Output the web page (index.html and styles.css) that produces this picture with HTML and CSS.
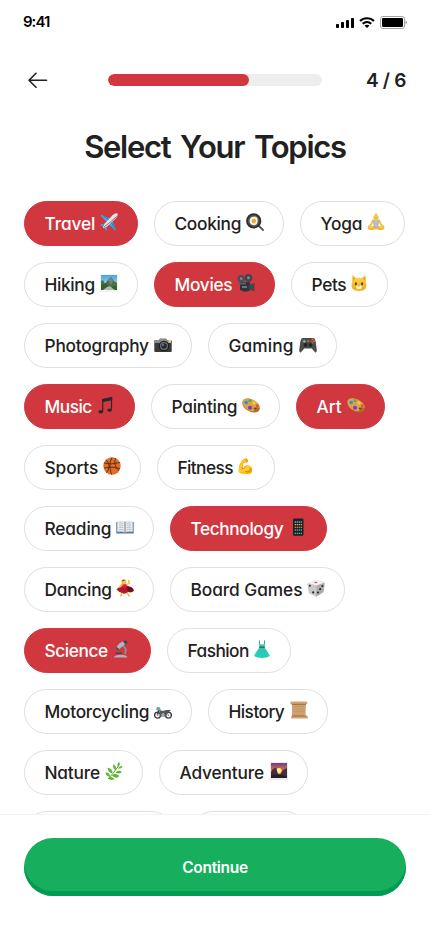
FILE: index.html
```html
<!DOCTYPE html>
<html lang="en">
<head>
<meta charset="utf-8">
<meta name="viewport" content="width=device-width, initial-scale=1">
<title>Select Your Topics</title>
<link rel="stylesheet" href="styles.css">
</head>
<body>
<svg class="defs" width="0" height="0" aria-hidden="true">
  <defs>
    <linearGradient id="gold" x1="0" y1="0" x2="0" y2="1"><stop offset="0" stop-color="#ffd95a"/><stop offset="1" stop-color="#eaa91c"/></linearGradient>
    <linearGradient id="sky" x1="0" y1="0" x2="0" y2="1"><stop offset="0" stop-color="#4aa6e0"/><stop offset="1" stop-color="#c9e7f5"/></linearGradient>
    <linearGradient id="dusk" x1="0" y1="0" x2="0" y2="1"><stop offset="0" stop-color="#6a3f8f"/><stop offset=".5" stop-color="#e5703d"/><stop offset="1" stop-color="#ffc84a"/></linearGradient>
    <symbol id="palette" viewBox="0 0 18 18">
      <path d="M.4 7.200C.2 3.500 4 2 8.200 3.200C13.500 4.500 18 8.600 17.800 12.500C17.600 16.200 13 17.300 8.500 15.700C4 14.200.6 11 .4 7.200Z" fill="#a96f28"/>
      <path d="M.4 6.500C.2 2.900 4 1.700 8.200 2.700C13.500 4 18 8 17.800 11.600C17.600 12.700 16.400 11.300 14.600 11.300C12.800 11.300 13.600 14.800 11.300 15.200C6 15.500.7 11 .4 6.500Z" fill="#dca04e"/>
      <circle cx="7.800" cy="4.600" r="1.600" fill="#49b83f"/><circle cx="4.200" cy="6.500" r="1.800" fill="#2496d6"/><circle cx="12" cy="6.900" r="1.600" fill="#efd02d"/><circle cx="8" cy="11.700" r="2" fill="#8038bb"/><circle cx="15.300" cy="9.700" r="1.500" fill="#e65236"/><ellipse cx="13" cy="12.500" rx="1.300" ry="1" fill="#6e4517"/>
    </symbol>
  </defs>
</svg>
<div class="screen">
  <div class="status">
    <span class="status__time">9:41</span>
    <span class="status__icons">
      <svg class="signal" width="18" height="11" viewBox="0 0 18 11"><rect x="0" y="7" width="3" height="4" rx=".8"/><rect x="5" y="5" width="3" height="6" rx=".8"/><rect x="10" y="3" width="3" height="8" rx=".8"/><rect x="15" y="1" width="3" height="10" rx=".8"/></svg>
      <svg class="wifi" width="16" height="11" viewBox="0 0 16 11"><path d="M1 4C4.800.3 11.200.3 15 4M3.700 6.800C6.200 4.500 9.800 4.500 12.300 6.800" fill="none" stroke="#000" stroke-width="2.100"/><path d="M5.500 8.600Q8 6.800 10.500 8.600L8 11Z"/></svg>
      <svg class="battery" width="27" height="13" viewBox="0 0 27 13"><rect x=".5" y=".5" width="24" height="12" rx="2.500" fill="none" stroke="#a3a3a3"/><rect x="2" y="2" width="21" height="9" rx="1.200"/><path d="M25.500 4.500Q27 5 27 6.500T25.500 8.500Z" fill="#a3a3a3"/></svg>
    </span>
  </div>

  <header class="header">
    <button class="back" aria-label="Back"><svg width="20" height="16" viewBox="0 0 20 16"><path d="M18.500 8.300H1M8 1.300L1 8.300 8 15.300" fill="none" stroke="#212121" stroke-width="1.600" stroke-linecap="round" stroke-linejoin="round"/></svg></button>
    <div class="progress"><div class="progress__fill"></div></div>
    <span class="step">4 / 6</span>
  </header>

  <h1 class="title">Select Your Topics</h1>

  <main class="topics">
    <button class="chip chip--on travel">Travel<svg class="icon" viewBox="0 0 18 18"><path d="M9.800 5.500L1.600 1.800 .8 3 6.500 8.800ZM12.400 8.400L16.200 16.600 14.900 17.300 9.200 11.500Z" fill="#3ea7ea"/><path d="M4.600 11.500L.8 11.100 .4 12.200 4 14ZM6.500 13.500L7 17.200 5.800 17.600 4 14Z" fill="#3ea7ea"/><path d="M17.500.5C16 0 14 .8 12.500 2.300L4.500 10.800 2.800 15.200 7.200 13.500 15.700 5.500C17.200 4 18 2 17.500.5Z" fill="#dfe5ea"/><path d="M16.500 3.500Q11 9 4 14" stroke="#71808d" stroke-width="1" fill="none"/><path d="M3 2.600L8.500 6.500M11.300 9.500L15.400 16" stroke="#286f9e" stroke-width=".8"/></svg></button>
    <button class="chip cooking">Cooking<svg class="icon" viewBox="0 0 18 18"><path d="M12.500 12.500L17 17" stroke="#555" stroke-width="1.800" stroke-linecap="round"/><circle cx="7.700" cy="7.900" r="7.600" fill="#2d302e"/><circle cx="7.700" cy="7.900" r="5.800" fill="#535751"/><path d="M4 6C5 3.500 7 4 8.500 3.500C11 3.500 12.200 6 11.600 8.500C11.600 11.500 9 12.800 6.800 12C3.800 11.500 3 8.500 4 6Z" fill="#f7f1e5"/><circle cx="7.800" cy="8" r="2.200" fill="#f5a623"/></svg></button>
    <button class="chip yoga">Yoga<svg class="icon" viewBox="0 0 18 18"><circle cx="9" cy="1.700" r="1.200" fill="#e6aa25"/><circle cx="9" cy="4" r="2.600" fill="url(#gold)"/><path d="M6.300 7L3.500 12.500 1.500 13.500M11.700 7L14.500 12.500 16.500 13.500" fill="none" stroke="#f3ba33" stroke-width="1.700" stroke-linecap="round"/><path d="M5.800 7Q9 6 12.200 7L11.500 13H6.500Z" fill="#b9bdc3"/><path d="M.6 14.800Q1 13 5 13.300Q9 11.500 13 13.300Q17 13 17.400 14.800Q17.500 17 13.500 17L9 16.200 4.500 17Q.5 17 .6 14.800Z" fill="url(#gold)"/><path d="M5.500 13.800Q9 11 12.500 13.800L9 15Z" fill="#aeb2b8"/></svg></button>
    <button class="chip hiking">Hiking<svg class="icon" viewBox="0 0 18 18"><path d="M0 0H18V18H0Z" fill="#f2f2ee"/><path d="M1 1H17V16H1Z" fill="url(#sky)"/><path d="M1 7L3 6 5 10 8 6 11 3 14 7 17 9V14H1Z" fill="#4f7044"/><path d="M8 6L11 3 13 7 11 11Z" fill="#718784"/><path d="M1 11L6 9 9 13 17 12V16H1Z" fill="#355f35"/><path d="M7 13Q11 11 12 14L15 16H3Z" fill="#b4bda8"/></svg></button>
    <button class="chip chip--on movies">Movies<svg class="icon" viewBox="0 0 18 18"><circle cx="4.200" cy="4.600" r="3.700" fill="#4c4f55"/><circle cx="11.500" cy="3.900" r="3.800" fill="#42454a"/><circle cx="4.200" cy="4.600" r="1.300" fill="#888c94"/><circle cx="11.500" cy="3.900" r="1.400" fill="#888c94"/><path d="M3 8H13V16.500Q8 19 3 16Z" fill="#303338"/><path d="M12 11L17.500 9V17.500L12 15Z" fill="#42454b"/><path d="M1 8.500H9V10.500H1Z" fill="#5b5e66"/><path d="M5 12H10V14H5Z" fill="#5b7890"/></svg></button>
    <button class="chip pets">Pets<svg class="icon" viewBox="0 0 18 18"><path d="M2 8L1.800 2Q2 .8 3.200 1.500L6.500 4Q9 3.300 11.500 4L14.800 1.500Q16 .8 16.200 2L16 8Q18.500 16.800 9 17Q-.5 16.800 2 8Z" fill="url(#gold)"/><path d="M3 2.800L5.200 4.500 3 7ZM15 2.800L12.800 4.500 15 7Z" fill="#e99b4a"/><ellipse cx="5.900" cy="9.800" rx="1" ry="1.500" fill="#44371d"/><ellipse cx="12.100" cy="9.800" rx="1" ry="1.500" fill="#44371d"/><ellipse cx="9" cy="13.200" rx="2.800" ry="2" fill="#fff0b5"/><path d="M8 11.500H10L9 12.800Z" fill="#d66d55"/></svg></button>
    <button class="chip photography">Photography<svg class="icon" viewBox="0 0 18 18"><path d="M.3 6Q.3 5 1.300 5H5L6 3.800H12L13 5H16.700Q17.700 5 17.700 6V16Q17.700 17 16.700 17H1.300Q.3 17 .3 16Z" fill="#393939"/><path d="M.3 6Q.3 5 1.300 5H5L6 3.800H12L13 5H17V8H.3Z" fill="#8b8b88"/><circle cx="10" cy="11" r="5.300" fill="#202123"/><circle cx="10" cy="11" r="4" fill="#6b7077"/><circle cx="10" cy="11" r="2.800" fill="#25272b"/><circle cx="9" cy="10" r="1" fill="#7c8794"/><path d="M14.500 5H17V7.500H14.500Z" fill="#f0d18c"/></svg></button>
    <button class="chip gaming">Gaming<svg class="icon" viewBox="0 0 18 18"><path d="M3.500 3H14.500Q16.200 3.400 16.800 7.500L17.800 15.500Q17.500 18 16 17.200L12.800 13.500H5.200L2 17.200Q.5 18 .2 15.500L1.200 7.500Q1.800 3.400 3.500 3Z" fill="#4b4b4a"/><path d="M3.500 6.300H6.900M5.200 4.700V8" stroke="#aaa" stroke-width="1"/><circle cx="6.500" cy="10" r="1.900" fill="#252525"/><circle cx="11.500" cy="10" r="1.900" fill="#252525"/><path d="M8 6H10" stroke="#aaa"/><circle cx="13.500" cy="4.600" r="1" fill="#e9643e"/><circle cx="15" cy="6.200" r="1" fill="#e9643e"/><circle cx="12" cy="6.200" r="1" fill="#a7532d"/><circle cx="13.500" cy="7.800" r="1" fill="#b75d36"/></svg></button>
    <button class="chip chip--on music">Music<svg class="icon" viewBox="0 0 18 18"><path d="M5 3L15.200.8V4.200L5 6.200Z" fill="#2a2a2c"/><path d="M5.700 3.500V15.500M14.500 2V13.500" stroke="#2a2a2c" stroke-width="1.200"/><ellipse cx="3.800" cy="15.800" rx="2.400" ry="1.700" fill="#2a2a2c"/><ellipse cx="12.600" cy="14.100" rx="2.400" ry="1.700" fill="#2a2a2c"/></svg></button>
    <button class="chip painting">Painting<svg class="icon" viewBox="0 0 18 18"><use href="#palette"/></svg></button>
    <button class="chip chip--on art">Art<svg class="icon" viewBox="0 0 18 18"><use href="#palette"/></svg></button>
    <button class="chip sports">Sports<svg class="icon" viewBox="0 0 18 18"><circle cx="9" cy="9" r="8.700" fill="#df6e28"/><path d="M1 6Q8 8 17 5.500M9 .5Q5 8 8.500 17.500M3 2.800Q9 9 3.500 15.500M12.500 1.200Q10 8 16 14M1 11Q9 9 17 11.500" fill="none" stroke="#46220f" stroke-width=".8"/></svg></button>
    <button class="chip fitness">Fitness<span class="emoji">💪</span></button>
    <button class="chip reading">Reading<svg class="icon" viewBox="0 0 18 18"><path d="M.3 4H17.700V15.500H.3Z" fill="#527d9f"/><path d="M1.300 3Q6 2 9 3.500Q12 2 16.700 3V13.800Q12 13 9 14.500Q6 13 1.300 13.800Z" fill="#ececec"/><path d="M9 3.500V14.500" stroke="#888c93" stroke-width="1.200"/><path d="M3 5Q5.500 4.500 7.300 5.300M3 7.200Q5.500 6.700 7.300 7.500M3 9.400Q5.500 8.900 7.300 9.700M3 11.600Q5.500 11.100 7.300 11.900M10.700 5.300Q12.500 4.500 15 5M10.700 7.500Q12.500 6.700 15 7.200M10.700 9.700Q12.500 8.900 15 9.400M10.700 11.900Q12.500 11.100 15 11.600" fill="none" stroke="#b4b8be" stroke-width=".9"/></svg></button>
    <button class="chip chip--on technology">Technology<svg class="icon" viewBox="0 0 18 18"><rect x="4" y=".5" width="10.500" height="17.300" rx="1.300" fill="#202124"/><path d="M5.700 4H13" stroke="#4db0df" stroke-width="1.300" stroke-dasharray="1.300 .7"/><path d="M5.700 6.700H13" stroke="#b7c34b" stroke-width="1.300" stroke-dasharray="1.300 .7"/><path d="M5.700 9.400H13" stroke="#e2734e" stroke-width="1.300" stroke-dasharray="1.300 .7"/><path d="M5.700 12H13" stroke="#479ec8" stroke-width="1.300" stroke-dasharray="1.300 .7"/><path d="M5.700 15.300H13" stroke="#4dbc81" stroke-width="1.300" stroke-dasharray="1.300 .7"/></svg></button>
    <button class="chip dancing">Dancing<svg class="icon" viewBox="0 0 18 18"><path d="M6 13L5 17M11 13L13 17" stroke="#f0b32d" stroke-width="1.500" stroke-linecap="round"/><path d="M4 8Q9 5 13 7.500Q18 8 17.700 12Q15 14.500 12 12.500Q9 16 6.500 14Q3.500 14 .5 10.500Q1.500 8.500 4 8Z" fill="#b9162d"/><path d="M11 7.500Q17 7.500 17.600 12Q14 13.500 11.500 12.500Z" fill="#5f1728"/><path d="M6.500 4.500L10.500 4.800 10 9H6Z" fill="#d91f37"/><path d="M6 5L3.800 8M11 5.500L13.500 4 12.500 1.500" fill="none" stroke="#f4bd35" stroke-width="1.400" stroke-linecap="round"/><circle cx="8" cy="3" r="2.500" fill="#f6c343"/><path d="M5.500 2.500Q6.500-.5 9.500.8L8 2Z" fill="#9b531d"/></svg></button>
    <button class="chip board">Board Games<svg class="icon" viewBox="0 0 18 18"><path d="M8.500.8L16.800 3 17.700 5 16.600 13 9 17.700 1.800 14 .3 4.800Z" fill="#c8c8c8"/><path d="M8.500.8L17 3.500 9.800 6.500 .6 4Z" fill="#f3f3f3"/><path d="M9.800 6.500L17.500 3.800 16.500 13 9 17.700Z" fill="#adadad"/><ellipse cx="8.800" cy="3.500" rx="1.700" ry=".8" fill="#e85151"/><g fill="#292929"><circle cx="2.800" cy="6.800" r="1"/><circle cx="6.200" cy="13.400" r="1.100"/><circle cx="15.400" cy="7" r="1.100"/><circle cx="13.200" cy="10.200" r="1.100"/><circle cx="11" cy="13.500" r="1.100"/></g></svg></button>
    <button class="chip chip--on science">Science<svg class="icon" viewBox="0 0 18 18"><path d="M9 5.500Q14.500 7.500 12 14" fill="none" stroke="#8795a1" stroke-width="1.800"/><path d="M6.500 3.200L10.500 1 12.500 3.800 6.500 9 3.500 7Z" fill="#a9bac6"/><path d="M10 1.200L13 .2 14.500 2.600 12.200 4.500Z" fill="#3f4850"/><path d="M3.200 7L6.500 9.200 5.300 11 2.200 9Z" fill="#4d5b67"/><path d="M2.500 13.200H9" stroke="#3c454d" stroke-width="1.400"/><path d="M.7 17.500Q2 14.800 8 14.800T14.300 17.500Z" fill="#a8b3bc"/></svg></button>
    <button class="chip fashion">Fashion<svg class="icon" viewBox="0 0 18 18"><path d="M6.500 4V.5M11.500 4V.5" stroke="#1aa894"/><path d="M6 3Q9 6 12 3L11.700 7.500H6.300Z" fill="#30cdb5"/><path d="M6.300 7.500H11.700Q14.500 11 17 16Q14 18 9 18T1 16Q3.500 11 6.300 7.500Z" fill="#2bd0b9"/><path d="M7.500 8.500L5 17M9 8.500V17.500M10.500 8.500L13 17" stroke="#20b5a2" stroke-width=".6"/><path d="M6.200 7.200H11.800" stroke="#5a4d42" stroke-width="1.300"/></svg></button>
    <button class="chip motorcycling">Motorcycling<svg class="icon" viewBox="0 0 18 18"><g fill="none" stroke="#3c3d3e" stroke-width="1.400"><circle cx="3.500" cy="14.200" r="2.900"/><circle cx="14.500" cy="14.200" r="2.900"/><path d="M3.500 14.200L5 7.500H3.500"/></g><path d="M5 9L9 10 12 9H17L14.500 11.500 11.500 15.500H6.500Z" fill="#55585b"/><circle cx="9" cy="13.700" r="1.700" fill="#a8abad"/><path d="M3 6Q6 5.500 7 9L4 9.500 2 8.500Z" fill="#61a4bd"/><circle cx="3.500" cy="14.200" r=".9" fill="#999"/><circle cx="14.500" cy="14.200" r=".9" fill="#999"/></svg></button>
    <button class="chip history">History<svg class="icon" viewBox="0 0 18 18"><path d="M2 2H16L15.500 16H2Z" fill="#cda26f"/><rect x=".3" y=".5" width="17" height="2.600" rx="1.200" fill="#d0a572"/><path d="M1.500 3.300H16" stroke="#80572e" stroke-width=".7"/><rect x="1" y="15" width="17" height="2.600" rx="1.200" fill="#d0a572"/><path d="M2 15H16.500" stroke="#80572e" stroke-width=".7"/><path d="M4 5.500H14M4 8H14M4 10.500H14" stroke="#bf9160" stroke-width=".5"/></svg></button>
    <button class="chip nature">Nature<svg class="icon" viewBox="0 0 18 18"><path d="M3 17Q8 12 13.500 4" fill="none" stroke="#579d28"/><g fill="#5bb52f"><path d="M13 5Q11.500 2 14 0Q16 2.500 13 5ZM13 6.500Q14 3.500 17.500 4Q17 7 13 6.500ZM10.500 8Q7 6 8.500 2.500Q12 4 10.500 8ZM10.500 10.500Q13 7.500 17 10Q14.500 12.500 10.500 10.500ZM7.500 11.500Q3 10.500 2.500 5.500Q8 7 7.500 11.500ZM7 13.500Q10 10.500 14.500 14Q11 17.500 7 13.500ZM5 14.800Q1 14.500 .5 10.500Q5 10.500 5 14.800Z"/><path d="M3 16.500Q6 13.500 9.500 17Q6 19 3 16.500Z"/></g></svg></button>
    <button class="chip adventure">Adventure<svg class="icon" viewBox="0 0 18 18"><path d="M0 0H18V18H0Z" fill="#ecebea"/><path d="M1 1H17V16H1Z" fill="url(#dusk)"/><circle cx="9" cy="8.500" r="2.500" fill="#fff08c"/><path d="M1 10L3 7 6 5.500 8 12 10 12.500 13 8 17 6V16H1Z" fill="#432e3d"/><path d="M1 13.500Q8 11 17 14.500V16H1Z" fill="#231f2c"/></svg></button>
    <div class="chip more-a"></div>
    <div class="chip more-b"></div>
  </main>

  <footer class="footer"><button class="continue">Continue</button></footer>
</div>
</body>
</html>
```
FILE: styles.css
```css
* { box-sizing: border-box; }
body { margin: 0; background: #fff; color: #212121; font-family: Inter, "Liberation Sans", sans-serif; font-feature-settings: "cv11" 1; }
button { font: inherit; color: inherit; font-feature-settings: inherit; cursor: pointer; }
.defs { position: absolute; }
.screen { width: 430px; height: 932px; display: flex; flex-direction: column; overflow: hidden; }

.status { height: 44px; padding: 0 23px; display: flex; justify-content: space-between; align-items: center; color: #000; }
.status__time { margin-top: -2px; font-size: 15px; font-weight: 600; letter-spacing: -1px; }
.status__icons { display: flex; align-items: center; height: 13px; margin-top: 1px; }
.wifi { margin-left: 5px; }
.battery { margin-left: 5px; }

.header { height: 72px; padding: 0 24px; display: grid; grid-template-columns: 84px 214px 84px; align-items: center; }
.back { width: 28px; height: 28px; padding: 0 0 0 4px; border: 0; background: none; display: flex; align-items: center; }
.progress { height: 12px; border-radius: 6px; background: #eee; overflow: hidden; }
.progress__fill { width: 66%; height: 100%; border-radius: 6px; background: #d1373e; }
.step { justify-self: end; font-size: 19px; font-weight: 600; letter-spacing: -.5px; word-spacing: .5px; }

.title { margin: 0; height: 85px; padding-top: 11px; text-align: center; font-size: 31px; line-height: 40px; font-weight: 600; letter-spacing: -1.25px; word-spacing: 3px; }

.topics { flex: 0 0 613px; height: 613px; padding: 0 24px; display: flex; flex-wrap: wrap; align-content: flex-start; gap: 16px; overflow: hidden; }
.chip { height: 45px; padding: 0 19px 0 19.500px; border: 1px solid #dfdfdf; border-radius: 23px; background: #fff; display: flex; justify-content: space-between; align-items: center; font-size: 17.3px; line-height: 24px; font-weight: 500; white-space: nowrap; }
.chip--on { background: #d1373e; border-color: #d1373e; color: #fff; }
.icon { flex: 0 0 18px; width: 18px; height: 18px; margin-top: -3px; }
.emoji { flex: 0 0 18px; width: 18px; margin-top: -3px; display: flex; justify-content: center; font-family: "Noto Color Emoji", sans-serif; font-size: 15px; letter-spacing: 0; }

.travel { width: 114px; letter-spacing: -.1px; }
.cooking { width: 130px; letter-spacing: -.3px; }
.yoga { width: 105px; letter-spacing: -.1px; }
.hiking { width: 114px; letter-spacing: -.35px; }
.movies { width: 121px; letter-spacing: -.3px; }
.pets { width: 97px; letter-spacing: -.35px; }
.photography { width: 168px; letter-spacing: -.2px; }
.gaming { width: 129px; letter-spacing: .1px; }
.music { width: 111px; letter-spacing: -.5px; }
.painting { width: 129px; letter-spacing: -.25px; }
.art { width: 89px; }
.sports { width: 117px; letter-spacing: -.1px; }
.fitness { width: 118px; letter-spacing: -.6px; }
.reading { width: 130px; letter-spacing: -.15px; }
.technology { width: 157px; letter-spacing: -.4px; }
.dancing { width: 130px; letter-spacing: -.25px; }
.board { width: 175px; letter-spacing: -.05px; }
.science { width: 127px; letter-spacing: -.4px; }
.fashion { width: 124px; letter-spacing: -.55px; }
.motorcycling { width: 168px; letter-spacing: -.25px; }
.history { width: 120px; letter-spacing: -.55px; }
.nature { width: 119px; letter-spacing: -.2px; }
.adventure { width: 149px; letter-spacing: -.15px; }
.more-a { width: 150px; }
.more-b { width: 118px; }

.footer { flex: 1; padding: 23px 24px 0; border-top: 1px solid #f3f3f3; background: #fff; }
.continue { width: 100%; height: 58px; padding: 0; border: 0; border-radius: 29px; background: #17af5d; box-shadow: inset 0 -5px #009b50; color: #fff; font-size: 15.5px; font-weight: 600; letter-spacing: -.3px; }
```
